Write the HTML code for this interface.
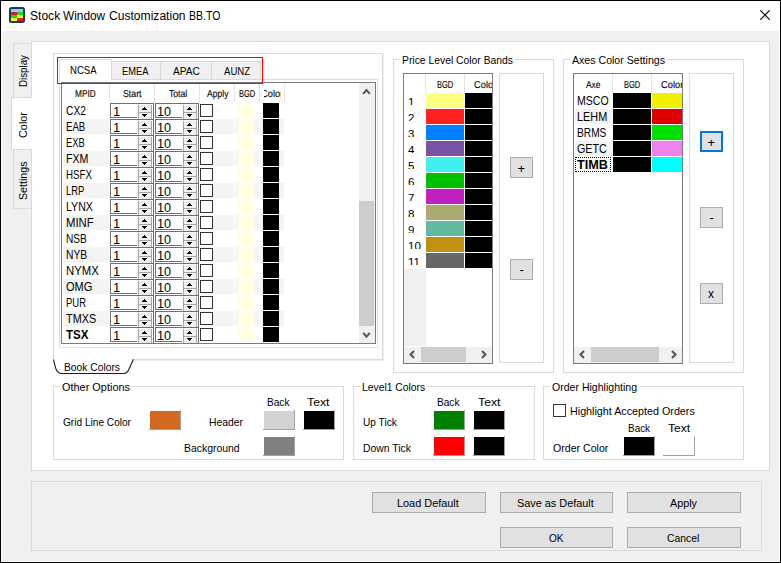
<!DOCTYPE html>
<html lang="en"><head><meta charset="utf-8"><title>Stock Window Customization BB.TO</title>
<style>
html,body{margin:0;padding:0;background:#f0f0f0;}
body{width:781px;height:563px;position:relative;overflow:hidden;font-family:"Liberation Sans", Arial, sans-serif;}
#w{position:absolute;left:0;top:0;width:781px;height:563px;overflow:hidden;}
#w div{position:absolute;}
.t{position:absolute;white-space:nowrap;display:block;}
</style></head><body><div id="w">
<div style="left:0px;top:0px;width:781px;height:563px;background:#000;"></div>
<div style="left:1px;top:1px;width:779px;height:561px;background:#fff;"></div>
<div style="left:1px;top:31px;width:778px;height:530px;background:#f0f0f0;"></div>
<div style="left:1px;top:31px;width:1px;height:530px;background:#fff;"></div>
<svg style="position:absolute;left:9px;top:7px" width="16" height="16" viewBox="0 0 16 16">
<rect x="0" y="0" width="16" height="16" rx="2.5" fill="#1f3a63"/>
<rect x="2" y="2" width="12" height="3" fill="#86d3ee"/>
<rect x="2" y="5" width="6" height="3" fill="#d42020"/><rect x="8" y="5" width="6" height="3" fill="#10e010"/>
<rect x="2" y="8" width="6" height="3" fill="#10e010"/><rect x="8" y="8" width="6" height="3" fill="#ffff10"/>
<rect x="2" y="11" width="6" height="3" fill="#ffff10"/><rect x="8" y="11" width="6" height="3" fill="#d42020"/>
</svg>
<span id="tt_Stock" class="t" style="left:29.80px;top:8.87px;font-size:12.5px;line-height:15px;color:#000;transform-origin:0 0;transform:scaleX(0.9659);">Stock</span>
<span id="tt_Window" class="t" style="left:62.80px;top:8.87px;font-size:12.5px;line-height:15px;color:#000;transform-origin:0 0;transform:scaleX(0.9490);">Window</span>
<span id="tt_Customization" class="t" style="left:109.20px;top:8.87px;font-size:12.5px;line-height:15px;color:#000;transform-origin:0 0;transform:scaleX(0.9671);">Customization</span>
<span id="tt_BBTO" class="t" style="left:189.20px;top:8.87px;font-size:12.5px;line-height:15px;color:#000;transform-origin:0 0;transform:scaleX(0.8422);">BB.TO</span>
<svg style="position:absolute;left:760px;top:10px" width="10" height="10" viewBox="0 0 10 10">
<path d="M0.3 0.3 L9.7 9.7 M9.7 0.3 L0.3 9.7" stroke="#000" stroke-width="1.15" fill="none"/></svg>
<div style="left:31px;top:41px;width:739px;height:430px;background:#fff;border:1px solid #dadada;box-sizing:border-box;"></div>
<div style="left:13px;top:43px;width:19px;height:55px;background:#f0f0f0;border:1px solid #dadada;box-sizing:border-box;border-right:none;"></div>
<div style="left:13px;top:149px;width:19px;height:60px;background:#f0f0f0;border:1px solid #dadada;box-sizing:border-box;border-right:none;"></div>
<div style="left:31px;top:43px;width:1px;height:55px;background:#dadada;"></div>
<div style="left:31px;top:149px;width:1px;height:60px;background:#dadada;"></div>
<div style="left:11px;top:97px;width:21px;height:53px;background:#fff;border:1px solid #dadada;box-sizing:border-box;border-right:none;"></div>
<span id="t4" class="t" style="left:15.52px;top:87px;font-size:11.5px;line-height:14px;color:#000;transform-origin:0 0;transform:rotate(-90deg) scaleX(0.8484);">Display</span>
<span id="t5" class="t" style="left:15.52px;top:138px;font-size:11.5px;line-height:14px;color:#000;transform-origin:0 0;transform:rotate(-90deg) scaleX(0.9460);">Color</span>
<span id="t6" class="t" style="left:15.52px;top:199.5px;font-size:11.5px;line-height:14px;color:#000;transform-origin:0 0;transform:rotate(-90deg) scaleX(0.9263);">Settings</span>
<div style="left:53px;top:53px;width:330px;height:307px;background:#fff;border:1px solid #dadada;box-sizing:border-box;"></div>
<div style="left:383px;top:54px;width:1px;height:307px;background:#ededed;"></div>
<div style="left:134px;top:360px;width:250px;height:1px;background:#ededed;"></div>
<svg style="position:absolute;left:50px;top:358px" width="90" height="18" viewBox="0 0 90 18">
<path d="M4 0.5 L4 1.5 C5.5 8 6.5 15.5 11.5 15.5 L74 15.5 C77 15.5 78.3 13 79.3 10.5 L83.2 1.5 L83.2 0.5 Z" fill="#fff" stroke="none"/>
<path d="M3.5 1.5 C5 8 6 15.5 11.5 15.5 L74 15.5 C77 15.5 78.3 13 79.3 10.5 L83.4 1.3" fill="none" stroke="#1c1c1c" stroke-width="1.1"/></svg>
<span id="t7" class="t" style="left:64.30px;top:360.69px;font-size:11px;line-height:13px;color:#000;transform-origin:0 0;transform:scaleX(0.9346);">Book Colors</span>
<div style="left:59px;top:79px;width:319px;height:1px;background:#d9d9d9;"></div>
<div style="left:59px;top:79px;width:1px;height:269px;background:#d9d9d9;"></div>
<div style="left:377px;top:79px;width:1px;height:269px;background:#e3e3e3;"></div>
<div style="left:59px;top:347px;width:319px;height:1px;background:#e3e3e3;"></div>
<div style="left:379px;top:82px;width:1px;height:268px;background:#f3f3f3;"></div>
<div style="left:111px;top:61px;width:50px;height:18px;background:#f0f0f0;border:1px solid #d9d9d9;box-sizing:border-box;border-bottom:none;"></div>
<span id="t8" class="t" style="left:121.50px;top:64.69px;font-size:11px;line-height:13px;color:#000;transform-origin:0 0;transform:scaleX(0.8465);">EMEA</span>
<div style="left:160px;top:61px;width:52px;height:18px;background:#f0f0f0;border:1px solid #d9d9d9;box-sizing:border-box;border-bottom:none;"></div>
<span id="t9" class="t" style="left:172.70px;top:64.69px;font-size:11px;line-height:13px;color:#000;transform-origin:0 0;transform:scaleX(0.9197);">APAC</span>
<div style="left:211px;top:61px;width:50px;height:18px;background:#f0f0f0;border:1px solid #d9d9d9;box-sizing:border-box;border-bottom:none;"></div>
<span id="t10" class="t" style="left:224.10px;top:64.69px;font-size:11px;line-height:13px;color:#000;transform-origin:0 0;transform:scaleX(0.8714);">AUNZ</span>
<div style="left:59px;top:59px;width:53px;height:21px;background:#fff;border:1px solid #d9d9d9;box-sizing:border-box;border-bottom:none;"></div>
<span id="t11" class="t" style="left:70.30px;top:63.69px;font-size:11px;line-height:13px;color:#000;transform-origin:0 0;transform:scaleX(0.8703);">NCSA</span>
<div style="left:61px;top:82px;width:315px;height:262px;background:#fff;border:1px solid #7a7a85;box-sizing:border-box;"></div>
<div style="left:109px;top:83px;width:1px;height:19px;background:#e4e4e4;"></div>
<div style="left:154px;top:83px;width:1px;height:19px;background:#e4e4e4;"></div>
<div style="left:199px;top:83px;width:1px;height:19px;background:#e4e4e4;"></div>
<div style="left:234px;top:83px;width:1px;height:19px;background:#e4e4e4;"></div>
<div style="left:259px;top:83px;width:1px;height:19px;background:#e4e4e4;"></div>
<div style="left:284px;top:83px;width:1px;height:19px;background:#e4e4e4;"></div>
<span id="t12" class="t" style="left:75.40px;top:89.44px;font-size:10px;line-height:12px;color:#000;text-rendering:geometricPrecision;-webkit-text-stroke:0.12px #000;transform-origin:0 0;transform:scaleX(0.8280);">MPID</span>
<span id="t13" class="t" style="left:123.40px;top:89.44px;font-size:10px;line-height:12px;color:#000;text-rendering:geometricPrecision;-webkit-text-stroke:0.12px #000;transform-origin:0 0;transform:scaleX(0.8757);">Start</span>
<span id="t14" class="t" style="left:168.70px;top:89.44px;font-size:10px;line-height:12px;color:#000;text-rendering:geometricPrecision;-webkit-text-stroke:0.12px #000;transform-origin:0 0;transform:scaleX(0.8615);">Total</span>
<span id="t15" class="t" style="left:206.50px;top:89.44px;font-size:10px;line-height:12px;color:#000;text-rendering:geometricPrecision;-webkit-text-stroke:0.12px #000;transform-origin:0 0;transform:scaleX(0.8595);">Apply</span>
<span id="t16" class="t" style="left:239.40px;top:89.44px;font-size:10px;line-height:12px;color:#000;text-rendering:geometricPrecision;-webkit-text-stroke:0.12px #000;transform-origin:0 0;transform:scaleX(0.7521);">BGD</span>
<div style="left:264px;top:84px;width:17px;height:17px;overflow:hidden;"><span id="t17" class="t" style="left:-3.40px;top:5.44px;font-size:10px;line-height:12px;color:#000;text-rendering:geometricPrecision;-webkit-text-stroke:0.12px #000;transform-origin:0 0;transform:scaleX(0.9300);">Color</span></div>
<span id="n0" class="t" style="left:65.60px;top:102.52px;font-size:13.5px;line-height:16px;color:#000;transform-origin:0 0;transform:scaleX(0.7615);">CX2</span>
<div style="left:110px;top:103px;width:44px;height:15px;background:#fff;"></div>
<div style="left:110px;top:103px;width:44px;height:1px;background:#707070;"></div>
<div style="left:110px;top:103px;width:1px;height:15px;background:#707070;"></div>
<div style="left:153px;top:103px;width:1px;height:16px;background:#707070;"></div>
<div style="left:139px;top:105px;width:12px;height:14px;background:#f0f0f0;"></div>
<div style="left:138px;top:105px;width:1px;height:14px;background:#a6a6a6;"></div>
<div style="left:151px;top:105px;width:1px;height:14px;background:#a6a6a6;"></div>
<div style="left:139px;top:112px;width:12px;height:1px;background:#a6a6a6;"></div>
<div style="left:111px;top:117px;width:26px;height:1px;background:#707070;"></div>
<svg style="position:absolute;left:142px;top:107px" width="5" height="10" viewBox="0 0 5 10"><path d="M2 0h1v1h1v1h1v1h-5v-1h1v-1h1z M0 7h5v1h-1v1h-1v1h-1v-1h-1v-1h-1z" fill="#000"/></svg>
<span id="t19" class="t" style="left:113.00px;top:103.50px;font-size:13px;line-height:16px;color:#000;transform-origin:0 0;transform:scaleX(1.0000);">1</span>
<div style="left:155px;top:103px;width:44px;height:15px;background:#fff;"></div>
<div style="left:155px;top:103px;width:44px;height:1px;background:#707070;"></div>
<div style="left:155px;top:103px;width:1px;height:15px;background:#707070;"></div>
<div style="left:198px;top:103px;width:1px;height:16px;background:#707070;"></div>
<div style="left:184px;top:105px;width:12px;height:14px;background:#f0f0f0;"></div>
<div style="left:183px;top:105px;width:1px;height:14px;background:#a6a6a6;"></div>
<div style="left:196px;top:105px;width:1px;height:14px;background:#a6a6a6;"></div>
<div style="left:184px;top:112px;width:12px;height:1px;background:#a6a6a6;"></div>
<div style="left:156px;top:117px;width:26px;height:1px;background:#707070;"></div>
<svg style="position:absolute;left:187px;top:107px" width="5" height="10" viewBox="0 0 5 10"><path d="M2 0h1v1h1v1h1v1h-5v-1h1v-1h1z M0 7h5v1h-1v1h-1v1h-1v-1h-1v-1h-1z" fill="#000"/></svg>
<span id="t20" class="t" style="left:157.00px;top:103.50px;font-size:13px;line-height:16px;color:#000;transform-origin:0 0;transform:scaleX(0.9700);">10</span>
<div style="left:200px;top:104px;width:13px;height:13px;background:#fff;border:1px solid #333;box-sizing:border-box;"></div>
<div style="left:238px;top:103px;width:16px;height:15px;background:#ffffe1;"></div>
<div style="left:263px;top:103px;width:16px;height:15px;background:#000;"></div>
<div style="left:63px;top:119px;width:221px;height:15px;background:#f4f4f4;"></div>
<div style="left:109px;top:119px;width:1px;height:15px;background:#fff;"></div>
<div style="left:154px;top:119px;width:1px;height:15px;background:#fff;"></div>
<div style="left:199px;top:119px;width:1px;height:15px;background:#fff;"></div>
<div style="left:234px;top:119px;width:1px;height:15px;background:#fff;"></div>
<div style="left:259px;top:119px;width:1px;height:15px;background:#fff;"></div>
<span id="n1" class="t" style="left:65.60px;top:118.52px;font-size:13.5px;line-height:16px;color:#000;transform-origin:0 0;transform:scaleX(0.7107);">EAB</span>
<div style="left:110px;top:119px;width:44px;height:15px;background:#fff;"></div>
<div style="left:110px;top:119px;width:44px;height:1px;background:#707070;"></div>
<div style="left:110px;top:119px;width:1px;height:15px;background:#707070;"></div>
<div style="left:153px;top:119px;width:1px;height:16px;background:#707070;"></div>
<div style="left:139px;top:121px;width:12px;height:14px;background:#f0f0f0;"></div>
<div style="left:138px;top:121px;width:1px;height:14px;background:#a6a6a6;"></div>
<div style="left:151px;top:121px;width:1px;height:14px;background:#a6a6a6;"></div>
<div style="left:139px;top:128px;width:12px;height:1px;background:#a6a6a6;"></div>
<div style="left:111px;top:133px;width:26px;height:1px;background:#707070;"></div>
<svg style="position:absolute;left:142px;top:123px" width="5" height="10" viewBox="0 0 5 10"><path d="M2 0h1v1h1v1h1v1h-5v-1h1v-1h1z M0 7h5v1h-1v1h-1v1h-1v-1h-1v-1h-1z" fill="#000"/></svg>
<span id="t22" class="t" style="left:113.00px;top:119.50px;font-size:13px;line-height:16px;color:#000;transform-origin:0 0;transform:scaleX(1.0000);">1</span>
<div style="left:155px;top:119px;width:44px;height:15px;background:#fff;"></div>
<div style="left:155px;top:119px;width:44px;height:1px;background:#707070;"></div>
<div style="left:155px;top:119px;width:1px;height:15px;background:#707070;"></div>
<div style="left:198px;top:119px;width:1px;height:16px;background:#707070;"></div>
<div style="left:184px;top:121px;width:12px;height:14px;background:#f0f0f0;"></div>
<div style="left:183px;top:121px;width:1px;height:14px;background:#a6a6a6;"></div>
<div style="left:196px;top:121px;width:1px;height:14px;background:#a6a6a6;"></div>
<div style="left:184px;top:128px;width:12px;height:1px;background:#a6a6a6;"></div>
<div style="left:156px;top:133px;width:26px;height:1px;background:#707070;"></div>
<svg style="position:absolute;left:187px;top:123px" width="5" height="10" viewBox="0 0 5 10"><path d="M2 0h1v1h1v1h1v1h-5v-1h1v-1h1z M0 7h5v1h-1v1h-1v1h-1v-1h-1v-1h-1z" fill="#000"/></svg>
<span id="t23" class="t" style="left:157.00px;top:119.50px;font-size:13px;line-height:16px;color:#000;transform-origin:0 0;transform:scaleX(0.9700);">10</span>
<div style="left:200px;top:120px;width:13px;height:13px;background:#fff;border:1px solid #333;box-sizing:border-box;"></div>
<div style="left:238px;top:119px;width:16px;height:15px;background:#ffffe1;"></div>
<div style="left:263px;top:119px;width:16px;height:15px;background:#000;"></div>
<span id="n2" class="t" style="left:65.60px;top:134.52px;font-size:13.5px;line-height:16px;color:#000;transform-origin:0 0;transform:scaleX(0.6922);">EXB</span>
<div style="left:110px;top:135px;width:44px;height:15px;background:#fff;"></div>
<div style="left:110px;top:135px;width:44px;height:1px;background:#707070;"></div>
<div style="left:110px;top:135px;width:1px;height:15px;background:#707070;"></div>
<div style="left:153px;top:135px;width:1px;height:16px;background:#707070;"></div>
<div style="left:139px;top:137px;width:12px;height:14px;background:#f0f0f0;"></div>
<div style="left:138px;top:137px;width:1px;height:14px;background:#a6a6a6;"></div>
<div style="left:151px;top:137px;width:1px;height:14px;background:#a6a6a6;"></div>
<div style="left:139px;top:144px;width:12px;height:1px;background:#a6a6a6;"></div>
<div style="left:111px;top:149px;width:26px;height:1px;background:#707070;"></div>
<svg style="position:absolute;left:142px;top:139px" width="5" height="10" viewBox="0 0 5 10"><path d="M2 0h1v1h1v1h1v1h-5v-1h1v-1h1z M0 7h5v1h-1v1h-1v1h-1v-1h-1v-1h-1z" fill="#000"/></svg>
<span id="t25" class="t" style="left:113.00px;top:135.50px;font-size:13px;line-height:16px;color:#000;transform-origin:0 0;transform:scaleX(1.0000);">1</span>
<div style="left:155px;top:135px;width:44px;height:15px;background:#fff;"></div>
<div style="left:155px;top:135px;width:44px;height:1px;background:#707070;"></div>
<div style="left:155px;top:135px;width:1px;height:15px;background:#707070;"></div>
<div style="left:198px;top:135px;width:1px;height:16px;background:#707070;"></div>
<div style="left:184px;top:137px;width:12px;height:14px;background:#f0f0f0;"></div>
<div style="left:183px;top:137px;width:1px;height:14px;background:#a6a6a6;"></div>
<div style="left:196px;top:137px;width:1px;height:14px;background:#a6a6a6;"></div>
<div style="left:184px;top:144px;width:12px;height:1px;background:#a6a6a6;"></div>
<div style="left:156px;top:149px;width:26px;height:1px;background:#707070;"></div>
<svg style="position:absolute;left:187px;top:139px" width="5" height="10" viewBox="0 0 5 10"><path d="M2 0h1v1h1v1h1v1h-5v-1h1v-1h1z M0 7h5v1h-1v1h-1v1h-1v-1h-1v-1h-1z" fill="#000"/></svg>
<span id="t26" class="t" style="left:157.00px;top:135.50px;font-size:13px;line-height:16px;color:#000;transform-origin:0 0;transform:scaleX(0.9700);">10</span>
<div style="left:200px;top:136px;width:13px;height:13px;background:#fff;border:1px solid #333;box-sizing:border-box;"></div>
<div style="left:238px;top:135px;width:16px;height:15px;background:#ffffe1;"></div>
<div style="left:263px;top:135px;width:16px;height:15px;background:#000;"></div>
<div style="left:63px;top:151px;width:221px;height:15px;background:#f4f4f4;"></div>
<div style="left:109px;top:151px;width:1px;height:15px;background:#fff;"></div>
<div style="left:154px;top:151px;width:1px;height:15px;background:#fff;"></div>
<div style="left:199px;top:151px;width:1px;height:15px;background:#fff;"></div>
<div style="left:234px;top:151px;width:1px;height:15px;background:#fff;"></div>
<div style="left:259px;top:151px;width:1px;height:15px;background:#fff;"></div>
<span id="n3" class="t" style="left:65.60px;top:150.52px;font-size:13.5px;line-height:16px;color:#000;transform-origin:0 0;transform:scaleX(0.7895);">FXM</span>
<div style="left:110px;top:151px;width:44px;height:15px;background:#fff;"></div>
<div style="left:110px;top:151px;width:44px;height:1px;background:#707070;"></div>
<div style="left:110px;top:151px;width:1px;height:15px;background:#707070;"></div>
<div style="left:153px;top:151px;width:1px;height:16px;background:#707070;"></div>
<div style="left:139px;top:153px;width:12px;height:14px;background:#f0f0f0;"></div>
<div style="left:138px;top:153px;width:1px;height:14px;background:#a6a6a6;"></div>
<div style="left:151px;top:153px;width:1px;height:14px;background:#a6a6a6;"></div>
<div style="left:139px;top:160px;width:12px;height:1px;background:#a6a6a6;"></div>
<div style="left:111px;top:165px;width:26px;height:1px;background:#707070;"></div>
<svg style="position:absolute;left:142px;top:155px" width="5" height="10" viewBox="0 0 5 10"><path d="M2 0h1v1h1v1h1v1h-5v-1h1v-1h1z M0 7h5v1h-1v1h-1v1h-1v-1h-1v-1h-1z" fill="#000"/></svg>
<span id="t28" class="t" style="left:113.00px;top:151.50px;font-size:13px;line-height:16px;color:#000;transform-origin:0 0;transform:scaleX(1.0000);">1</span>
<div style="left:155px;top:151px;width:44px;height:15px;background:#fff;"></div>
<div style="left:155px;top:151px;width:44px;height:1px;background:#707070;"></div>
<div style="left:155px;top:151px;width:1px;height:15px;background:#707070;"></div>
<div style="left:198px;top:151px;width:1px;height:16px;background:#707070;"></div>
<div style="left:184px;top:153px;width:12px;height:14px;background:#f0f0f0;"></div>
<div style="left:183px;top:153px;width:1px;height:14px;background:#a6a6a6;"></div>
<div style="left:196px;top:153px;width:1px;height:14px;background:#a6a6a6;"></div>
<div style="left:184px;top:160px;width:12px;height:1px;background:#a6a6a6;"></div>
<div style="left:156px;top:165px;width:26px;height:1px;background:#707070;"></div>
<svg style="position:absolute;left:187px;top:155px" width="5" height="10" viewBox="0 0 5 10"><path d="M2 0h1v1h1v1h1v1h-5v-1h1v-1h1z M0 7h5v1h-1v1h-1v1h-1v-1h-1v-1h-1z" fill="#000"/></svg>
<span id="t29" class="t" style="left:157.00px;top:151.50px;font-size:13px;line-height:16px;color:#000;transform-origin:0 0;transform:scaleX(0.9700);">10</span>
<div style="left:200px;top:152px;width:13px;height:13px;background:#fff;border:1px solid #333;box-sizing:border-box;"></div>
<div style="left:238px;top:151px;width:16px;height:15px;background:#ffffe1;"></div>
<div style="left:263px;top:151px;width:16px;height:15px;background:#000;"></div>
<span id="n4" class="t" style="left:65.60px;top:166.52px;font-size:13.5px;line-height:16px;color:#000;transform-origin:0 0;transform:scaleX(0.7191);">HSFX</span>
<div style="left:110px;top:167px;width:44px;height:15px;background:#fff;"></div>
<div style="left:110px;top:167px;width:44px;height:1px;background:#707070;"></div>
<div style="left:110px;top:167px;width:1px;height:15px;background:#707070;"></div>
<div style="left:153px;top:167px;width:1px;height:16px;background:#707070;"></div>
<div style="left:139px;top:169px;width:12px;height:14px;background:#f0f0f0;"></div>
<div style="left:138px;top:169px;width:1px;height:14px;background:#a6a6a6;"></div>
<div style="left:151px;top:169px;width:1px;height:14px;background:#a6a6a6;"></div>
<div style="left:139px;top:176px;width:12px;height:1px;background:#a6a6a6;"></div>
<div style="left:111px;top:181px;width:26px;height:1px;background:#707070;"></div>
<svg style="position:absolute;left:142px;top:171px" width="5" height="10" viewBox="0 0 5 10"><path d="M2 0h1v1h1v1h1v1h-5v-1h1v-1h1z M0 7h5v1h-1v1h-1v1h-1v-1h-1v-1h-1z" fill="#000"/></svg>
<span id="t31" class="t" style="left:113.00px;top:167.50px;font-size:13px;line-height:16px;color:#000;transform-origin:0 0;transform:scaleX(1.0000);">1</span>
<div style="left:155px;top:167px;width:44px;height:15px;background:#fff;"></div>
<div style="left:155px;top:167px;width:44px;height:1px;background:#707070;"></div>
<div style="left:155px;top:167px;width:1px;height:15px;background:#707070;"></div>
<div style="left:198px;top:167px;width:1px;height:16px;background:#707070;"></div>
<div style="left:184px;top:169px;width:12px;height:14px;background:#f0f0f0;"></div>
<div style="left:183px;top:169px;width:1px;height:14px;background:#a6a6a6;"></div>
<div style="left:196px;top:169px;width:1px;height:14px;background:#a6a6a6;"></div>
<div style="left:184px;top:176px;width:12px;height:1px;background:#a6a6a6;"></div>
<div style="left:156px;top:181px;width:26px;height:1px;background:#707070;"></div>
<svg style="position:absolute;left:187px;top:171px" width="5" height="10" viewBox="0 0 5 10"><path d="M2 0h1v1h1v1h1v1h-5v-1h1v-1h1z M0 7h5v1h-1v1h-1v1h-1v-1h-1v-1h-1z" fill="#000"/></svg>
<span id="t32" class="t" style="left:157.00px;top:167.50px;font-size:13px;line-height:16px;color:#000;transform-origin:0 0;transform:scaleX(0.9700);">10</span>
<div style="left:200px;top:168px;width:13px;height:13px;background:#fff;border:1px solid #333;box-sizing:border-box;"></div>
<div style="left:238px;top:167px;width:16px;height:15px;background:#ffffe1;"></div>
<div style="left:263px;top:167px;width:16px;height:15px;background:#000;"></div>
<div style="left:63px;top:183px;width:221px;height:15px;background:#f4f4f4;"></div>
<div style="left:109px;top:183px;width:1px;height:15px;background:#fff;"></div>
<div style="left:154px;top:183px;width:1px;height:15px;background:#fff;"></div>
<div style="left:199px;top:183px;width:1px;height:15px;background:#fff;"></div>
<div style="left:234px;top:183px;width:1px;height:15px;background:#fff;"></div>
<div style="left:259px;top:183px;width:1px;height:15px;background:#fff;"></div>
<span id="n5" class="t" style="left:65.60px;top:182.52px;font-size:13.5px;line-height:16px;color:#000;transform-origin:0 0;transform:scaleX(0.6929);">LRP</span>
<div style="left:110px;top:183px;width:44px;height:15px;background:#fff;"></div>
<div style="left:110px;top:183px;width:44px;height:1px;background:#707070;"></div>
<div style="left:110px;top:183px;width:1px;height:15px;background:#707070;"></div>
<div style="left:153px;top:183px;width:1px;height:16px;background:#707070;"></div>
<div style="left:139px;top:185px;width:12px;height:14px;background:#f0f0f0;"></div>
<div style="left:138px;top:185px;width:1px;height:14px;background:#a6a6a6;"></div>
<div style="left:151px;top:185px;width:1px;height:14px;background:#a6a6a6;"></div>
<div style="left:139px;top:192px;width:12px;height:1px;background:#a6a6a6;"></div>
<div style="left:111px;top:197px;width:26px;height:1px;background:#707070;"></div>
<svg style="position:absolute;left:142px;top:187px" width="5" height="10" viewBox="0 0 5 10"><path d="M2 0h1v1h1v1h1v1h-5v-1h1v-1h1z M0 7h5v1h-1v1h-1v1h-1v-1h-1v-1h-1z" fill="#000"/></svg>
<span id="t34" class="t" style="left:113.00px;top:183.50px;font-size:13px;line-height:16px;color:#000;transform-origin:0 0;transform:scaleX(1.0000);">1</span>
<div style="left:155px;top:183px;width:44px;height:15px;background:#fff;"></div>
<div style="left:155px;top:183px;width:44px;height:1px;background:#707070;"></div>
<div style="left:155px;top:183px;width:1px;height:15px;background:#707070;"></div>
<div style="left:198px;top:183px;width:1px;height:16px;background:#707070;"></div>
<div style="left:184px;top:185px;width:12px;height:14px;background:#f0f0f0;"></div>
<div style="left:183px;top:185px;width:1px;height:14px;background:#a6a6a6;"></div>
<div style="left:196px;top:185px;width:1px;height:14px;background:#a6a6a6;"></div>
<div style="left:184px;top:192px;width:12px;height:1px;background:#a6a6a6;"></div>
<div style="left:156px;top:197px;width:26px;height:1px;background:#707070;"></div>
<svg style="position:absolute;left:187px;top:187px" width="5" height="10" viewBox="0 0 5 10"><path d="M2 0h1v1h1v1h1v1h-5v-1h1v-1h1z M0 7h5v1h-1v1h-1v1h-1v-1h-1v-1h-1z" fill="#000"/></svg>
<span id="t35" class="t" style="left:157.00px;top:183.50px;font-size:13px;line-height:16px;color:#000;transform-origin:0 0;transform:scaleX(0.9700);">10</span>
<div style="left:200px;top:184px;width:13px;height:13px;background:#fff;border:1px solid #333;box-sizing:border-box;"></div>
<div style="left:238px;top:183px;width:16px;height:15px;background:#ffffe1;"></div>
<div style="left:263px;top:183px;width:16px;height:15px;background:#000;"></div>
<span id="n6" class="t" style="left:65.60px;top:198.52px;font-size:13.5px;line-height:16px;color:#000;transform-origin:0 0;transform:scaleX(0.7850);">LYNX</span>
<div style="left:110px;top:199px;width:44px;height:15px;background:#fff;"></div>
<div style="left:110px;top:199px;width:44px;height:1px;background:#707070;"></div>
<div style="left:110px;top:199px;width:1px;height:15px;background:#707070;"></div>
<div style="left:153px;top:199px;width:1px;height:16px;background:#707070;"></div>
<div style="left:139px;top:201px;width:12px;height:14px;background:#f0f0f0;"></div>
<div style="left:138px;top:201px;width:1px;height:14px;background:#a6a6a6;"></div>
<div style="left:151px;top:201px;width:1px;height:14px;background:#a6a6a6;"></div>
<div style="left:139px;top:208px;width:12px;height:1px;background:#a6a6a6;"></div>
<div style="left:111px;top:213px;width:26px;height:1px;background:#707070;"></div>
<svg style="position:absolute;left:142px;top:203px" width="5" height="10" viewBox="0 0 5 10"><path d="M2 0h1v1h1v1h1v1h-5v-1h1v-1h1z M0 7h5v1h-1v1h-1v1h-1v-1h-1v-1h-1z" fill="#000"/></svg>
<span id="t37" class="t" style="left:113.00px;top:199.50px;font-size:13px;line-height:16px;color:#000;transform-origin:0 0;transform:scaleX(1.0000);">1</span>
<div style="left:155px;top:199px;width:44px;height:15px;background:#fff;"></div>
<div style="left:155px;top:199px;width:44px;height:1px;background:#707070;"></div>
<div style="left:155px;top:199px;width:1px;height:15px;background:#707070;"></div>
<div style="left:198px;top:199px;width:1px;height:16px;background:#707070;"></div>
<div style="left:184px;top:201px;width:12px;height:14px;background:#f0f0f0;"></div>
<div style="left:183px;top:201px;width:1px;height:14px;background:#a6a6a6;"></div>
<div style="left:196px;top:201px;width:1px;height:14px;background:#a6a6a6;"></div>
<div style="left:184px;top:208px;width:12px;height:1px;background:#a6a6a6;"></div>
<div style="left:156px;top:213px;width:26px;height:1px;background:#707070;"></div>
<svg style="position:absolute;left:187px;top:203px" width="5" height="10" viewBox="0 0 5 10"><path d="M2 0h1v1h1v1h1v1h-5v-1h1v-1h1z M0 7h5v1h-1v1h-1v1h-1v-1h-1v-1h-1z" fill="#000"/></svg>
<span id="t38" class="t" style="left:157.00px;top:199.50px;font-size:13px;line-height:16px;color:#000;transform-origin:0 0;transform:scaleX(0.9700);">10</span>
<div style="left:200px;top:200px;width:13px;height:13px;background:#fff;border:1px solid #333;box-sizing:border-box;"></div>
<div style="left:238px;top:199px;width:16px;height:15px;background:#ffffe1;"></div>
<div style="left:263px;top:199px;width:16px;height:15px;background:#000;"></div>
<div style="left:63px;top:215px;width:221px;height:15px;background:#f4f4f4;"></div>
<div style="left:109px;top:215px;width:1px;height:15px;background:#fff;"></div>
<div style="left:154px;top:215px;width:1px;height:15px;background:#fff;"></div>
<div style="left:199px;top:215px;width:1px;height:15px;background:#fff;"></div>
<div style="left:234px;top:215px;width:1px;height:15px;background:#fff;"></div>
<div style="left:259px;top:215px;width:1px;height:15px;background:#fff;"></div>
<span id="n7" class="t" style="left:65.60px;top:214.52px;font-size:13.5px;line-height:16px;color:#000;transform-origin:0 0;transform:scaleX(0.8394);">MINF</span>
<div style="left:110px;top:215px;width:44px;height:15px;background:#fff;"></div>
<div style="left:110px;top:215px;width:44px;height:1px;background:#707070;"></div>
<div style="left:110px;top:215px;width:1px;height:15px;background:#707070;"></div>
<div style="left:153px;top:215px;width:1px;height:16px;background:#707070;"></div>
<div style="left:139px;top:217px;width:12px;height:14px;background:#f0f0f0;"></div>
<div style="left:138px;top:217px;width:1px;height:14px;background:#a6a6a6;"></div>
<div style="left:151px;top:217px;width:1px;height:14px;background:#a6a6a6;"></div>
<div style="left:139px;top:224px;width:12px;height:1px;background:#a6a6a6;"></div>
<div style="left:111px;top:229px;width:26px;height:1px;background:#707070;"></div>
<svg style="position:absolute;left:142px;top:219px" width="5" height="10" viewBox="0 0 5 10"><path d="M2 0h1v1h1v1h1v1h-5v-1h1v-1h1z M0 7h5v1h-1v1h-1v1h-1v-1h-1v-1h-1z" fill="#000"/></svg>
<span id="t40" class="t" style="left:113.00px;top:215.50px;font-size:13px;line-height:16px;color:#000;transform-origin:0 0;transform:scaleX(1.0000);">1</span>
<div style="left:155px;top:215px;width:44px;height:15px;background:#fff;"></div>
<div style="left:155px;top:215px;width:44px;height:1px;background:#707070;"></div>
<div style="left:155px;top:215px;width:1px;height:15px;background:#707070;"></div>
<div style="left:198px;top:215px;width:1px;height:16px;background:#707070;"></div>
<div style="left:184px;top:217px;width:12px;height:14px;background:#f0f0f0;"></div>
<div style="left:183px;top:217px;width:1px;height:14px;background:#a6a6a6;"></div>
<div style="left:196px;top:217px;width:1px;height:14px;background:#a6a6a6;"></div>
<div style="left:184px;top:224px;width:12px;height:1px;background:#a6a6a6;"></div>
<div style="left:156px;top:229px;width:26px;height:1px;background:#707070;"></div>
<svg style="position:absolute;left:187px;top:219px" width="5" height="10" viewBox="0 0 5 10"><path d="M2 0h1v1h1v1h1v1h-5v-1h1v-1h1z M0 7h5v1h-1v1h-1v1h-1v-1h-1v-1h-1z" fill="#000"/></svg>
<span id="t41" class="t" style="left:157.00px;top:215.50px;font-size:13px;line-height:16px;color:#000;transform-origin:0 0;transform:scaleX(0.9700);">10</span>
<div style="left:200px;top:216px;width:13px;height:13px;background:#fff;border:1px solid #333;box-sizing:border-box;"></div>
<div style="left:238px;top:215px;width:16px;height:15px;background:#ffffe1;"></div>
<div style="left:263px;top:215px;width:16px;height:15px;background:#000;"></div>
<span id="n8" class="t" style="left:65.60px;top:230.52px;font-size:13.5px;line-height:16px;color:#000;transform-origin:0 0;transform:scaleX(0.7491);">NSB</span>
<div style="left:110px;top:231px;width:44px;height:15px;background:#fff;"></div>
<div style="left:110px;top:231px;width:44px;height:1px;background:#707070;"></div>
<div style="left:110px;top:231px;width:1px;height:15px;background:#707070;"></div>
<div style="left:153px;top:231px;width:1px;height:16px;background:#707070;"></div>
<div style="left:139px;top:233px;width:12px;height:14px;background:#f0f0f0;"></div>
<div style="left:138px;top:233px;width:1px;height:14px;background:#a6a6a6;"></div>
<div style="left:151px;top:233px;width:1px;height:14px;background:#a6a6a6;"></div>
<div style="left:139px;top:240px;width:12px;height:1px;background:#a6a6a6;"></div>
<div style="left:111px;top:245px;width:26px;height:1px;background:#707070;"></div>
<svg style="position:absolute;left:142px;top:235px" width="5" height="10" viewBox="0 0 5 10"><path d="M2 0h1v1h1v1h1v1h-5v-1h1v-1h1z M0 7h5v1h-1v1h-1v1h-1v-1h-1v-1h-1z" fill="#000"/></svg>
<span id="t43" class="t" style="left:113.00px;top:231.50px;font-size:13px;line-height:16px;color:#000;transform-origin:0 0;transform:scaleX(1.0000);">1</span>
<div style="left:155px;top:231px;width:44px;height:15px;background:#fff;"></div>
<div style="left:155px;top:231px;width:44px;height:1px;background:#707070;"></div>
<div style="left:155px;top:231px;width:1px;height:15px;background:#707070;"></div>
<div style="left:198px;top:231px;width:1px;height:16px;background:#707070;"></div>
<div style="left:184px;top:233px;width:12px;height:14px;background:#f0f0f0;"></div>
<div style="left:183px;top:233px;width:1px;height:14px;background:#a6a6a6;"></div>
<div style="left:196px;top:233px;width:1px;height:14px;background:#a6a6a6;"></div>
<div style="left:184px;top:240px;width:12px;height:1px;background:#a6a6a6;"></div>
<div style="left:156px;top:245px;width:26px;height:1px;background:#707070;"></div>
<svg style="position:absolute;left:187px;top:235px" width="5" height="10" viewBox="0 0 5 10"><path d="M2 0h1v1h1v1h1v1h-5v-1h1v-1h1z M0 7h5v1h-1v1h-1v1h-1v-1h-1v-1h-1z" fill="#000"/></svg>
<span id="t44" class="t" style="left:157.00px;top:231.50px;font-size:13px;line-height:16px;color:#000;transform-origin:0 0;transform:scaleX(0.9700);">10</span>
<div style="left:200px;top:232px;width:13px;height:13px;background:#fff;border:1px solid #333;box-sizing:border-box;"></div>
<div style="left:238px;top:231px;width:16px;height:15px;background:#ffffe1;"></div>
<div style="left:263px;top:231px;width:16px;height:15px;background:#000;"></div>
<div style="left:63px;top:247px;width:221px;height:15px;background:#f4f4f4;"></div>
<div style="left:109px;top:247px;width:1px;height:15px;background:#fff;"></div>
<div style="left:154px;top:247px;width:1px;height:15px;background:#fff;"></div>
<div style="left:199px;top:247px;width:1px;height:15px;background:#fff;"></div>
<div style="left:234px;top:247px;width:1px;height:15px;background:#fff;"></div>
<div style="left:259px;top:247px;width:1px;height:15px;background:#fff;"></div>
<span id="n9" class="t" style="left:65.60px;top:246.52px;font-size:13.5px;line-height:16px;color:#000;transform-origin:0 0;transform:scaleX(0.7635);">NYB</span>
<div style="left:110px;top:247px;width:44px;height:15px;background:#fff;"></div>
<div style="left:110px;top:247px;width:44px;height:1px;background:#707070;"></div>
<div style="left:110px;top:247px;width:1px;height:15px;background:#707070;"></div>
<div style="left:153px;top:247px;width:1px;height:16px;background:#707070;"></div>
<div style="left:139px;top:249px;width:12px;height:14px;background:#f0f0f0;"></div>
<div style="left:138px;top:249px;width:1px;height:14px;background:#a6a6a6;"></div>
<div style="left:151px;top:249px;width:1px;height:14px;background:#a6a6a6;"></div>
<div style="left:139px;top:256px;width:12px;height:1px;background:#a6a6a6;"></div>
<div style="left:111px;top:261px;width:26px;height:1px;background:#707070;"></div>
<svg style="position:absolute;left:142px;top:251px" width="5" height="10" viewBox="0 0 5 10"><path d="M2 0h1v1h1v1h1v1h-5v-1h1v-1h1z M0 7h5v1h-1v1h-1v1h-1v-1h-1v-1h-1z" fill="#000"/></svg>
<span id="t46" class="t" style="left:113.00px;top:247.50px;font-size:13px;line-height:16px;color:#000;transform-origin:0 0;transform:scaleX(1.0000);">1</span>
<div style="left:155px;top:247px;width:44px;height:15px;background:#fff;"></div>
<div style="left:155px;top:247px;width:44px;height:1px;background:#707070;"></div>
<div style="left:155px;top:247px;width:1px;height:15px;background:#707070;"></div>
<div style="left:198px;top:247px;width:1px;height:16px;background:#707070;"></div>
<div style="left:184px;top:249px;width:12px;height:14px;background:#f0f0f0;"></div>
<div style="left:183px;top:249px;width:1px;height:14px;background:#a6a6a6;"></div>
<div style="left:196px;top:249px;width:1px;height:14px;background:#a6a6a6;"></div>
<div style="left:184px;top:256px;width:12px;height:1px;background:#a6a6a6;"></div>
<div style="left:156px;top:261px;width:26px;height:1px;background:#707070;"></div>
<svg style="position:absolute;left:187px;top:251px" width="5" height="10" viewBox="0 0 5 10"><path d="M2 0h1v1h1v1h1v1h-5v-1h1v-1h1z M0 7h5v1h-1v1h-1v1h-1v-1h-1v-1h-1z" fill="#000"/></svg>
<span id="t47" class="t" style="left:157.00px;top:247.50px;font-size:13px;line-height:16px;color:#000;transform-origin:0 0;transform:scaleX(0.9700);">10</span>
<div style="left:200px;top:248px;width:13px;height:13px;background:#fff;border:1px solid #333;box-sizing:border-box;"></div>
<div style="left:238px;top:247px;width:16px;height:15px;background:#ffffe1;"></div>
<div style="left:263px;top:247px;width:16px;height:15px;background:#000;"></div>
<span id="n10" class="t" style="left:65.60px;top:262.52px;font-size:13.5px;line-height:16px;color:#000;transform-origin:0 0;transform:scaleX(0.8407);">NYMX</span>
<div style="left:110px;top:263px;width:44px;height:15px;background:#fff;"></div>
<div style="left:110px;top:263px;width:44px;height:1px;background:#707070;"></div>
<div style="left:110px;top:263px;width:1px;height:15px;background:#707070;"></div>
<div style="left:153px;top:263px;width:1px;height:16px;background:#707070;"></div>
<div style="left:139px;top:265px;width:12px;height:14px;background:#f0f0f0;"></div>
<div style="left:138px;top:265px;width:1px;height:14px;background:#a6a6a6;"></div>
<div style="left:151px;top:265px;width:1px;height:14px;background:#a6a6a6;"></div>
<div style="left:139px;top:272px;width:12px;height:1px;background:#a6a6a6;"></div>
<div style="left:111px;top:277px;width:26px;height:1px;background:#707070;"></div>
<svg style="position:absolute;left:142px;top:267px" width="5" height="10" viewBox="0 0 5 10"><path d="M2 0h1v1h1v1h1v1h-5v-1h1v-1h1z M0 7h5v1h-1v1h-1v1h-1v-1h-1v-1h-1z" fill="#000"/></svg>
<span id="t49" class="t" style="left:113.00px;top:263.50px;font-size:13px;line-height:16px;color:#000;transform-origin:0 0;transform:scaleX(1.0000);">1</span>
<div style="left:155px;top:263px;width:44px;height:15px;background:#fff;"></div>
<div style="left:155px;top:263px;width:44px;height:1px;background:#707070;"></div>
<div style="left:155px;top:263px;width:1px;height:15px;background:#707070;"></div>
<div style="left:198px;top:263px;width:1px;height:16px;background:#707070;"></div>
<div style="left:184px;top:265px;width:12px;height:14px;background:#f0f0f0;"></div>
<div style="left:183px;top:265px;width:1px;height:14px;background:#a6a6a6;"></div>
<div style="left:196px;top:265px;width:1px;height:14px;background:#a6a6a6;"></div>
<div style="left:184px;top:272px;width:12px;height:1px;background:#a6a6a6;"></div>
<div style="left:156px;top:277px;width:26px;height:1px;background:#707070;"></div>
<svg style="position:absolute;left:187px;top:267px" width="5" height="10" viewBox="0 0 5 10"><path d="M2 0h1v1h1v1h1v1h-5v-1h1v-1h1z M0 7h5v1h-1v1h-1v1h-1v-1h-1v-1h-1z" fill="#000"/></svg>
<span id="t50" class="t" style="left:157.00px;top:263.50px;font-size:13px;line-height:16px;color:#000;transform-origin:0 0;transform:scaleX(0.9700);">10</span>
<div style="left:200px;top:264px;width:13px;height:13px;background:#fff;border:1px solid #333;box-sizing:border-box;"></div>
<div style="left:238px;top:263px;width:16px;height:15px;background:#ffffe1;"></div>
<div style="left:263px;top:263px;width:16px;height:15px;background:#000;"></div>
<div style="left:63px;top:279px;width:221px;height:15px;background:#f4f4f4;"></div>
<div style="left:109px;top:279px;width:1px;height:15px;background:#fff;"></div>
<div style="left:154px;top:279px;width:1px;height:15px;background:#fff;"></div>
<div style="left:199px;top:279px;width:1px;height:15px;background:#fff;"></div>
<div style="left:234px;top:279px;width:1px;height:15px;background:#fff;"></div>
<div style="left:259px;top:279px;width:1px;height:15px;background:#fff;"></div>
<span id="n11" class="t" style="left:65.60px;top:278.52px;font-size:13.5px;line-height:16px;color:#000;transform-origin:0 0;transform:scaleX(0.8186);">OMG</span>
<div style="left:110px;top:279px;width:44px;height:15px;background:#fff;"></div>
<div style="left:110px;top:279px;width:44px;height:1px;background:#707070;"></div>
<div style="left:110px;top:279px;width:1px;height:15px;background:#707070;"></div>
<div style="left:153px;top:279px;width:1px;height:16px;background:#707070;"></div>
<div style="left:139px;top:281px;width:12px;height:14px;background:#f0f0f0;"></div>
<div style="left:138px;top:281px;width:1px;height:14px;background:#a6a6a6;"></div>
<div style="left:151px;top:281px;width:1px;height:14px;background:#a6a6a6;"></div>
<div style="left:139px;top:288px;width:12px;height:1px;background:#a6a6a6;"></div>
<div style="left:111px;top:293px;width:26px;height:1px;background:#707070;"></div>
<svg style="position:absolute;left:142px;top:283px" width="5" height="10" viewBox="0 0 5 10"><path d="M2 0h1v1h1v1h1v1h-5v-1h1v-1h1z M0 7h5v1h-1v1h-1v1h-1v-1h-1v-1h-1z" fill="#000"/></svg>
<span id="t52" class="t" style="left:113.00px;top:279.50px;font-size:13px;line-height:16px;color:#000;transform-origin:0 0;transform:scaleX(1.0000);">1</span>
<div style="left:155px;top:279px;width:44px;height:15px;background:#fff;"></div>
<div style="left:155px;top:279px;width:44px;height:1px;background:#707070;"></div>
<div style="left:155px;top:279px;width:1px;height:15px;background:#707070;"></div>
<div style="left:198px;top:279px;width:1px;height:16px;background:#707070;"></div>
<div style="left:184px;top:281px;width:12px;height:14px;background:#f0f0f0;"></div>
<div style="left:183px;top:281px;width:1px;height:14px;background:#a6a6a6;"></div>
<div style="left:196px;top:281px;width:1px;height:14px;background:#a6a6a6;"></div>
<div style="left:184px;top:288px;width:12px;height:1px;background:#a6a6a6;"></div>
<div style="left:156px;top:293px;width:26px;height:1px;background:#707070;"></div>
<svg style="position:absolute;left:187px;top:283px" width="5" height="10" viewBox="0 0 5 10"><path d="M2 0h1v1h1v1h1v1h-5v-1h1v-1h1z M0 7h5v1h-1v1h-1v1h-1v-1h-1v-1h-1z" fill="#000"/></svg>
<span id="t53" class="t" style="left:157.00px;top:279.50px;font-size:13px;line-height:16px;color:#000;transform-origin:0 0;transform:scaleX(0.9700);">10</span>
<div style="left:200px;top:280px;width:13px;height:13px;background:#fff;border:1px solid #333;box-sizing:border-box;"></div>
<div style="left:238px;top:279px;width:16px;height:15px;background:#ffffe1;"></div>
<div style="left:263px;top:279px;width:16px;height:15px;background:#000;"></div>
<span id="n12" class="t" style="left:65.60px;top:294.52px;font-size:13.5px;line-height:16px;color:#000;transform-origin:0 0;transform:scaleX(0.7014);">PUR</span>
<div style="left:110px;top:295px;width:44px;height:15px;background:#fff;"></div>
<div style="left:110px;top:295px;width:44px;height:1px;background:#707070;"></div>
<div style="left:110px;top:295px;width:1px;height:15px;background:#707070;"></div>
<div style="left:153px;top:295px;width:1px;height:16px;background:#707070;"></div>
<div style="left:139px;top:297px;width:12px;height:14px;background:#f0f0f0;"></div>
<div style="left:138px;top:297px;width:1px;height:14px;background:#a6a6a6;"></div>
<div style="left:151px;top:297px;width:1px;height:14px;background:#a6a6a6;"></div>
<div style="left:139px;top:304px;width:12px;height:1px;background:#a6a6a6;"></div>
<div style="left:111px;top:309px;width:26px;height:1px;background:#707070;"></div>
<svg style="position:absolute;left:142px;top:299px" width="5" height="10" viewBox="0 0 5 10"><path d="M2 0h1v1h1v1h1v1h-5v-1h1v-1h1z M0 7h5v1h-1v1h-1v1h-1v-1h-1v-1h-1z" fill="#000"/></svg>
<span id="t55" class="t" style="left:113.00px;top:295.50px;font-size:13px;line-height:16px;color:#000;transform-origin:0 0;transform:scaleX(1.0000);">1</span>
<div style="left:155px;top:295px;width:44px;height:15px;background:#fff;"></div>
<div style="left:155px;top:295px;width:44px;height:1px;background:#707070;"></div>
<div style="left:155px;top:295px;width:1px;height:15px;background:#707070;"></div>
<div style="left:198px;top:295px;width:1px;height:16px;background:#707070;"></div>
<div style="left:184px;top:297px;width:12px;height:14px;background:#f0f0f0;"></div>
<div style="left:183px;top:297px;width:1px;height:14px;background:#a6a6a6;"></div>
<div style="left:196px;top:297px;width:1px;height:14px;background:#a6a6a6;"></div>
<div style="left:184px;top:304px;width:12px;height:1px;background:#a6a6a6;"></div>
<div style="left:156px;top:309px;width:26px;height:1px;background:#707070;"></div>
<svg style="position:absolute;left:187px;top:299px" width="5" height="10" viewBox="0 0 5 10"><path d="M2 0h1v1h1v1h1v1h-5v-1h1v-1h1z M0 7h5v1h-1v1h-1v1h-1v-1h-1v-1h-1z" fill="#000"/></svg>
<span id="t56" class="t" style="left:157.00px;top:295.50px;font-size:13px;line-height:16px;color:#000;transform-origin:0 0;transform:scaleX(0.9700);">10</span>
<div style="left:200px;top:296px;width:13px;height:13px;background:#fff;border:1px solid #333;box-sizing:border-box;"></div>
<div style="left:238px;top:295px;width:16px;height:15px;background:#ffffe1;"></div>
<div style="left:263px;top:295px;width:16px;height:15px;background:#000;"></div>
<div style="left:63px;top:311px;width:221px;height:15px;background:#f4f4f4;"></div>
<div style="left:109px;top:311px;width:1px;height:15px;background:#fff;"></div>
<div style="left:154px;top:311px;width:1px;height:15px;background:#fff;"></div>
<div style="left:199px;top:311px;width:1px;height:15px;background:#fff;"></div>
<div style="left:234px;top:311px;width:1px;height:15px;background:#fff;"></div>
<div style="left:259px;top:311px;width:1px;height:15px;background:#fff;"></div>
<span id="n13" class="t" style="left:65.60px;top:310.52px;font-size:13.5px;line-height:16px;color:#000;transform-origin:0 0;transform:scaleX(0.8050);">TMXS</span>
<div style="left:110px;top:311px;width:44px;height:15px;background:#fff;"></div>
<div style="left:110px;top:311px;width:44px;height:1px;background:#707070;"></div>
<div style="left:110px;top:311px;width:1px;height:15px;background:#707070;"></div>
<div style="left:153px;top:311px;width:1px;height:16px;background:#707070;"></div>
<div style="left:139px;top:313px;width:12px;height:14px;background:#f0f0f0;"></div>
<div style="left:138px;top:313px;width:1px;height:14px;background:#a6a6a6;"></div>
<div style="left:151px;top:313px;width:1px;height:14px;background:#a6a6a6;"></div>
<div style="left:139px;top:320px;width:12px;height:1px;background:#a6a6a6;"></div>
<div style="left:111px;top:325px;width:26px;height:1px;background:#707070;"></div>
<svg style="position:absolute;left:142px;top:315px" width="5" height="10" viewBox="0 0 5 10"><path d="M2 0h1v1h1v1h1v1h-5v-1h1v-1h1z M0 7h5v1h-1v1h-1v1h-1v-1h-1v-1h-1z" fill="#000"/></svg>
<span id="t58" class="t" style="left:113.00px;top:311.50px;font-size:13px;line-height:16px;color:#000;transform-origin:0 0;transform:scaleX(1.0000);">1</span>
<div style="left:155px;top:311px;width:44px;height:15px;background:#fff;"></div>
<div style="left:155px;top:311px;width:44px;height:1px;background:#707070;"></div>
<div style="left:155px;top:311px;width:1px;height:15px;background:#707070;"></div>
<div style="left:198px;top:311px;width:1px;height:16px;background:#707070;"></div>
<div style="left:184px;top:313px;width:12px;height:14px;background:#f0f0f0;"></div>
<div style="left:183px;top:313px;width:1px;height:14px;background:#a6a6a6;"></div>
<div style="left:196px;top:313px;width:1px;height:14px;background:#a6a6a6;"></div>
<div style="left:184px;top:320px;width:12px;height:1px;background:#a6a6a6;"></div>
<div style="left:156px;top:325px;width:26px;height:1px;background:#707070;"></div>
<svg style="position:absolute;left:187px;top:315px" width="5" height="10" viewBox="0 0 5 10"><path d="M2 0h1v1h1v1h1v1h-5v-1h1v-1h1z M0 7h5v1h-1v1h-1v1h-1v-1h-1v-1h-1z" fill="#000"/></svg>
<span id="t59" class="t" style="left:157.00px;top:311.50px;font-size:13px;line-height:16px;color:#000;transform-origin:0 0;transform:scaleX(0.9700);">10</span>
<div style="left:200px;top:312px;width:13px;height:13px;background:#fff;border:1px solid #333;box-sizing:border-box;"></div>
<div style="left:238px;top:311px;width:16px;height:15px;background:#ffffe1;"></div>
<div style="left:263px;top:311px;width:16px;height:15px;background:#000;"></div>
<span id="n14" class="t" style="left:65.60px;top:326.52px;font-size:13.5px;line-height:16px;color:#000;font-weight:bold;transform-origin:0 0;transform:scaleX(0.8566);">TSX</span>
<div style="left:110px;top:327px;width:44px;height:15px;background:#fff;"></div>
<div style="left:110px;top:327px;width:44px;height:1px;background:#707070;"></div>
<div style="left:110px;top:327px;width:1px;height:15px;background:#707070;"></div>
<div style="left:153px;top:327px;width:1px;height:16px;background:#707070;"></div>
<div style="left:139px;top:329px;width:12px;height:14px;background:#f0f0f0;"></div>
<div style="left:138px;top:329px;width:1px;height:14px;background:#a6a6a6;"></div>
<div style="left:151px;top:329px;width:1px;height:14px;background:#a6a6a6;"></div>
<div style="left:139px;top:336px;width:12px;height:1px;background:#a6a6a6;"></div>
<div style="left:111px;top:341px;width:26px;height:1px;background:#707070;"></div>
<svg style="position:absolute;left:142px;top:331px" width="5" height="10" viewBox="0 0 5 10"><path d="M2 0h1v1h1v1h1v1h-5v-1h1v-1h1z M0 7h5v1h-1v1h-1v1h-1v-1h-1v-1h-1z" fill="#000"/></svg>
<span id="t61" class="t" style="left:113.00px;top:327.50px;font-size:13px;line-height:16px;color:#000;transform-origin:0 0;transform:scaleX(1.0000);">1</span>
<div style="left:155px;top:327px;width:44px;height:15px;background:#fff;"></div>
<div style="left:155px;top:327px;width:44px;height:1px;background:#707070;"></div>
<div style="left:155px;top:327px;width:1px;height:15px;background:#707070;"></div>
<div style="left:198px;top:327px;width:1px;height:16px;background:#707070;"></div>
<div style="left:184px;top:329px;width:12px;height:14px;background:#f0f0f0;"></div>
<div style="left:183px;top:329px;width:1px;height:14px;background:#a6a6a6;"></div>
<div style="left:196px;top:329px;width:1px;height:14px;background:#a6a6a6;"></div>
<div style="left:184px;top:336px;width:12px;height:1px;background:#a6a6a6;"></div>
<div style="left:156px;top:341px;width:26px;height:1px;background:#707070;"></div>
<svg style="position:absolute;left:187px;top:331px" width="5" height="10" viewBox="0 0 5 10"><path d="M2 0h1v1h1v1h1v1h-5v-1h1v-1h1z M0 7h5v1h-1v1h-1v1h-1v-1h-1v-1h-1z" fill="#000"/></svg>
<span id="t62" class="t" style="left:157.00px;top:327.50px;font-size:13px;line-height:16px;color:#000;transform-origin:0 0;transform:scaleX(0.9700);">10</span>
<div style="left:200px;top:328px;width:13px;height:13px;background:#fff;border:1px solid #333;box-sizing:border-box;"></div>
<div style="left:238px;top:327px;width:16px;height:15px;background:#ffffe1;"></div>
<div style="left:263px;top:327px;width:16px;height:15px;background:#000;"></div>
<div style="left:359px;top:83px;width:16px;height:260px;background:#f0f0f0;"></div>
<div style="left:359px;top:201px;width:15px;height:125px;background:#cdcdcd;"></div>
<svg style="position:absolute;left:362px;top:88px" width="9" height="7" viewBox="0 0 9 7"><path d="M1.2 5.8 L4.5 2 L7.8 5.8" fill="none" stroke="#555" stroke-width="2"/></svg>
<svg style="position:absolute;left:362px;top:332px" width="9" height="7" viewBox="0 0 9 7"><path d="M1.2 0.8 L4.5 4.6 L7.8 0.8" fill="none" stroke="#555" stroke-width="2"/></svg>
<div style="left:57px;top:57px;width:206px;height:27px;border:1px solid #ff0000;box-sizing:border-box;"></div>
<div style="left:393px;top:59px;width:161px;height:314px;border:1px solid #dadada;box-sizing:border-box;"></div>
<div style="left:399.5px;top:53px;width:115px;height:13px;background:#fff;"></div>
<span id="t63" class="t" style="left:401.50px;top:53.69px;font-size:11px;line-height:13px;color:#000;transform-origin:0 0;transform:scaleX(0.9406);">Price Level Color Bands</span>
<div style="left:563px;top:59px;width:181px;height:314px;border:1px solid #dadada;box-sizing:border-box;"></div>
<div style="left:570.2px;top:53px;width:97px;height:13px;background:#fff;"></div>
<span id="t64" class="t" style="left:572.20px;top:53.69px;font-size:11px;line-height:13px;color:#000;transform-origin:0 0;transform:scaleX(0.9626);">Axes Color Settings</span>
<div style="left:53px;top:386px;width:291px;height:74px;border:1px solid #dadada;box-sizing:border-box;"></div>
<div style="left:59.5px;top:380px;width:72px;height:13px;background:#fff;"></div>
<span id="t65" class="t" style="left:61.50px;top:380.69px;font-size:11px;line-height:13px;color:#000;transform-origin:0 0;transform:scaleX(0.9929);">Other Options</span>
<div style="left:353px;top:386px;width:182px;height:74px;border:1px solid #dadada;box-sizing:border-box;"></div>
<div style="left:359.8px;top:380px;width:67.2px;height:13px;background:#fff;"></div>
<span id="t66" class="t" style="left:361.80px;top:380.69px;font-size:11px;line-height:13px;color:#000;transform-origin:0 0;transform:scaleX(0.9396);">Level1 Colors</span>
<div style="left:543px;top:386px;width:201px;height:74px;border:1px solid #dadada;box-sizing:border-box;"></div>
<div style="left:549.9px;top:380px;width:89px;height:13px;background:#fff;"></div>
<span id="t67" class="t" style="left:551.90px;top:380.69px;font-size:11px;line-height:13px;color:#000;transform-origin:0 0;transform:scaleX(0.9588);">Order Highlighting</span>
<div style="left:403px;top:73px;width:90px;height:291px;background:#fff;border:1px solid #7a7a85;box-sizing:border-box;"></div>
<div style="left:404px;top:269px;width:22px;height:77px;background:#f0f0f0;"></div>
<div style="left:425px;top:74px;width:1px;height:19px;background:#e4e4e4;"></div>
<div style="left:464px;top:74px;width:1px;height:19px;background:#e4e4e4;"></div>
<span id="t68" class="t" style="left:437.30px;top:80.44px;font-size:10px;line-height:12px;color:#000;text-rendering:geometricPrecision;-webkit-text-stroke:0.12px #000;transform-origin:0 0;transform:scaleX(0.7521);">BGD</span>
<div style="left:465px;top:75px;width:27px;height:17px;overflow:hidden;"><span id="t69" class="t" style="left:9.00px;top:5.44px;font-size:10px;line-height:12px;color:#000;text-rendering:geometricPrecision;-webkit-text-stroke:0.12px #000;transform-origin:0 0;transform:scaleX(0.9300);">Color</span></div>
<div style="left:426px;top:93px;width:38px;height:15px;background:#ffff80;"></div>
<div style="left:465px;top:93px;width:27px;height:15px;background:#000;"></div>
<div style="left:404px;top:93px;width:21px;height:12px;overflow:hidden;"><span id="t70" class="t" style="left:3.50px;top:2.59px;font-size:11px;line-height:13px;color:#000;transform-origin:0 0;transform:scaleX(1.0500);">1</span></div>
<div style="left:426px;top:109px;width:38px;height:15px;background:#ff2020;"></div>
<div style="left:465px;top:109px;width:27px;height:15px;background:#000;"></div>
<div style="left:404px;top:109px;width:21px;height:12px;overflow:hidden;"><span id="t71" class="t" style="left:3.50px;top:2.59px;font-size:11px;line-height:13px;color:#000;transform-origin:0 0;transform:scaleX(1.0500);">2</span></div>
<div style="left:426px;top:125px;width:38px;height:15px;background:#0080ff;"></div>
<div style="left:465px;top:125px;width:27px;height:15px;background:#000;"></div>
<div style="left:404px;top:125px;width:21px;height:12px;overflow:hidden;"><span id="t72" class="t" style="left:3.50px;top:2.59px;font-size:11px;line-height:13px;color:#000;transform-origin:0 0;transform:scaleX(1.0500);">3</span></div>
<div style="left:426px;top:141px;width:38px;height:15px;background:#7a52a8;"></div>
<div style="left:465px;top:141px;width:27px;height:15px;background:#000;"></div>
<div style="left:404px;top:141px;width:21px;height:12px;overflow:hidden;"><span id="t73" class="t" style="left:3.50px;top:2.59px;font-size:11px;line-height:13px;color:#000;transform-origin:0 0;transform:scaleX(1.0500);">4</span></div>
<div style="left:426px;top:157px;width:38px;height:15px;background:#40f0f0;"></div>
<div style="left:465px;top:157px;width:27px;height:15px;background:#000;"></div>
<div style="left:404px;top:157px;width:21px;height:12px;overflow:hidden;"><span id="t74" class="t" style="left:3.50px;top:2.59px;font-size:11px;line-height:13px;color:#000;transform-origin:0 0;transform:scaleX(1.0500);">5</span></div>
<div style="left:426px;top:173px;width:38px;height:15px;background:#00c000;"></div>
<div style="left:465px;top:173px;width:27px;height:15px;background:#000;"></div>
<div style="left:404px;top:173px;width:21px;height:12px;overflow:hidden;"><span id="t75" class="t" style="left:3.50px;top:2.59px;font-size:11px;line-height:13px;color:#000;transform-origin:0 0;transform:scaleX(1.0500);">6</span></div>
<div style="left:426px;top:189px;width:38px;height:15px;background:#c020c0;"></div>
<div style="left:465px;top:189px;width:27px;height:15px;background:#000;"></div>
<div style="left:404px;top:189px;width:21px;height:12px;overflow:hidden;"><span id="t76" class="t" style="left:3.50px;top:2.59px;font-size:11px;line-height:13px;color:#000;transform-origin:0 0;transform:scaleX(1.0500);">7</span></div>
<div style="left:426px;top:205px;width:38px;height:15px;background:#aaaa70;"></div>
<div style="left:465px;top:205px;width:27px;height:15px;background:#000;"></div>
<div style="left:404px;top:205px;width:21px;height:12px;overflow:hidden;"><span id="t77" class="t" style="left:3.50px;top:2.59px;font-size:11px;line-height:13px;color:#000;transform-origin:0 0;transform:scaleX(1.0500);">8</span></div>
<div style="left:426px;top:221px;width:38px;height:15px;background:#60bba0;"></div>
<div style="left:465px;top:221px;width:27px;height:15px;background:#000;"></div>
<div style="left:404px;top:221px;width:21px;height:12px;overflow:hidden;"><span id="t78" class="t" style="left:3.50px;top:2.59px;font-size:11px;line-height:13px;color:#000;transform-origin:0 0;transform:scaleX(1.0500);">9</span></div>
<div style="left:426px;top:237px;width:38px;height:15px;background:#c09010;"></div>
<div style="left:465px;top:237px;width:27px;height:15px;background:#000;"></div>
<div style="left:404px;top:237px;width:21px;height:12px;overflow:hidden;"><span id="t79" class="t" style="left:3.50px;top:2.59px;font-size:11px;line-height:13px;color:#000;transform-origin:0 0;transform:scaleX(1.0500);">10</span></div>
<div style="left:426px;top:253px;width:38px;height:15px;background:#666666;"></div>
<div style="left:465px;top:253px;width:27px;height:15px;background:#000;"></div>
<div style="left:404px;top:253px;width:21px;height:12px;overflow:hidden;"><span id="t80" class="t" style="left:3.50px;top:2.59px;font-size:11px;line-height:13px;color:#000;transform-origin:0 0;transform:scaleX(1.0500);">11</span></div>
<div style="left:404px;top:347px;width:88px;height:16px;background:#f0f0f0;"></div>
<div style="left:421px;top:347px;width:45px;height:15px;background:#cdcdcd;"></div>
<svg style="position:absolute;left:409px;top:350px" width="6" height="9" viewBox="0 0 6 9"><path d="M5 1 L1.5 4.5 L5 8" fill="none" stroke="#555" stroke-width="2"/></svg>
<svg style="position:absolute;left:481px;top:350px" width="6" height="9" viewBox="0 0 6 9"><path d="M1 1 L4.5 4.5 L1 8" fill="none" stroke="#555" stroke-width="2"/></svg>
<div style="left:499px;top:73px;width:45px;height:290px;background:#fff;border:1px solid #dadada;box-sizing:border-box;"></div>
<div style="left:510px;top:157px;width:23px;height:21px;background:#e1e1e1;border:1px solid #adadad;box-sizing:border-box;"></div>
<span id="t81" class="t" style="left:517.50px;top:160.70px;font-size:13px;line-height:16px;color:#000;transform-origin:0 0;transform:scaleX(1.0000);">+</span>
<div style="left:510px;top:259px;width:23px;height:21px;background:#e1e1e1;border:1px solid #adadad;box-sizing:border-box;"></div>
<span id="t82" class="t" style="left:519.50px;top:261.50px;font-size:13px;line-height:16px;color:#000;transform-origin:0 0;transform:scaleX(1.0000);">-</span>
<div style="left:573px;top:73px;width:110px;height:291px;background:#fff;border:1px solid #7a7a85;box-sizing:border-box;"></div>
<div style="left:612px;top:74px;width:1px;height:19px;background:#e4e4e4;"></div>
<div style="left:651px;top:74px;width:1px;height:19px;background:#e4e4e4;"></div>
<span id="t83" class="t" style="left:586.20px;top:80.44px;font-size:10px;line-height:12px;color:#000;text-rendering:geometricPrecision;-webkit-text-stroke:0.12px #000;transform-origin:0 0;transform:scaleX(0.8413);">Axe</span>
<span id="t84" class="t" style="left:624.30px;top:80.44px;font-size:10px;line-height:12px;color:#000;text-rendering:geometricPrecision;-webkit-text-stroke:0.12px #000;transform-origin:0 0;transform:scaleX(0.7521);">BGD</span>
<div style="left:652px;top:75px;width:30px;height:17px;overflow:hidden;"><span id="t85" class="t" style="left:9.00px;top:5.44px;font-size:10px;line-height:12px;color:#000;text-rendering:geometricPrecision;-webkit-text-stroke:0.12px #000;transform-origin:0 0;transform:scaleX(0.9300);">Color</span></div>
<div style="left:613px;top:93px;width:38px;height:15px;background:#000;"></div>
<div style="left:652px;top:93px;width:30px;height:15px;background:#f0f000;"></div>
<span id="a0" class="t" style="left:577.00px;top:93.00px;font-size:13px;line-height:16px;color:#000;transform-origin:0 0;transform:scaleX(0.8103);">MSCO</span>
<div style="left:575px;top:109px;width:37px;height:15px;background:#f4f4f4;"></div>
<div style="left:613px;top:109px;width:38px;height:15px;background:#000;"></div>
<div style="left:652px;top:109px;width:30px;height:15px;background:#e00000;"></div>
<span id="a1" class="t" style="left:577.00px;top:109.00px;font-size:13px;line-height:16px;color:#000;transform-origin:0 0;transform:scaleX(0.8360);">LEHM</span>
<div style="left:613px;top:125px;width:38px;height:15px;background:#000;"></div>
<div style="left:652px;top:125px;width:30px;height:15px;background:#00e000;"></div>
<span id="a2" class="t" style="left:577.00px;top:125.00px;font-size:13px;line-height:16px;color:#000;transform-origin:0 0;transform:scaleX(0.7827);">BRMS</span>
<div style="left:575px;top:141px;width:37px;height:15px;background:#f4f4f4;"></div>
<div style="left:613px;top:141px;width:38px;height:15px;background:#000;"></div>
<div style="left:652px;top:141px;width:30px;height:15px;background:#ee82ee;"></div>
<span id="a3" class="t" style="left:577.00px;top:141.00px;font-size:13px;line-height:16px;color:#000;transform-origin:0 0;transform:scaleX(0.8249);">GETC</span>
<div style="left:613px;top:157px;width:38px;height:15px;background:#000;"></div>
<div style="left:652px;top:157px;width:30px;height:15px;background:#00ffff;"></div>
<span id="a4" class="t" style="left:577.00px;top:157.00px;font-size:13px;line-height:16px;color:#000;font-weight:bold;transform-origin:0 0;transform:scaleX(0.9754);">TIMB</span>
<div style="left:575px;top:157px;width:36px;height:15px;border:1px dotted #000;box-sizing:border-box;"></div>
<div style="left:574px;top:347px;width:108px;height:16px;background:#f0f0f0;"></div>
<div style="left:591px;top:347px;width:68px;height:15px;background:#cdcdcd;"></div>
<svg style="position:absolute;left:579px;top:350px" width="6" height="9" viewBox="0 0 6 9"><path d="M5 1 L1.5 4.5 L5 8" fill="none" stroke="#555" stroke-width="2"/></svg>
<svg style="position:absolute;left:671px;top:350px" width="6" height="9" viewBox="0 0 6 9"><path d="M1 1 L4.5 4.5 L1 8" fill="none" stroke="#555" stroke-width="2"/></svg>
<div style="left:689px;top:73px;width:45px;height:290px;background:#fff;border:1px solid #dadada;box-sizing:border-box;"></div>
<div style="left:700px;top:131px;width:23px;height:21px;background:#e1e1e1;border:2px solid #0078d7;box-sizing:border-box;"></div>
<span id="t91" class="t" style="left:707.60px;top:134.70px;font-size:13px;line-height:16px;color:#000;transform-origin:0 0;transform:scaleX(1.0000);">+</span>
<div style="left:700px;top:207px;width:23px;height:21px;background:#e1e1e1;border:1px solid #adadad;box-sizing:border-box;"></div>
<span id="t92" class="t" style="left:709.50px;top:209.50px;font-size:13px;line-height:16px;color:#000;transform-origin:0 0;transform:scaleX(1.0000);">-</span>
<div style="left:700px;top:283px;width:23px;height:21px;background:#e1e1e1;border:1px solid #adadad;box-sizing:border-box;"></div>
<span id="t93" class="t" style="left:708.00px;top:286.84px;font-size:12px;line-height:14px;color:#000;transform-origin:0 0;transform:scaleX(1.0000);">x</span>
<span id="t94" class="t" style="left:62.80px;top:415.69px;font-size:11px;line-height:13px;color:#000;transform-origin:0 0;transform:scaleX(0.9191);">Grid Line Color</span>
<div style="left:150px;top:411px;width:30px;height:18px;background:#d2691e;"></div>
<div style="left:180px;top:410px;width:1px;height:20px;background:#a0a0a0;"></div>
<div style="left:149px;top:429px;width:32px;height:1px;background:#a0a0a0;"></div>
<span id="t95" class="t" style="left:267.00px;top:395.69px;font-size:11px;line-height:13px;color:#000;transform-origin:0 0;transform:scaleX(0.9195);">Back</span>
<span id="t96" class="t" style="left:307.30px;top:395.69px;font-size:11px;line-height:13px;color:#000;transform-origin:0 0;transform:scaleX(1.1146);">Text</span>
<span id="t97" class="t" style="left:208.70px;top:415.69px;font-size:11px;line-height:13px;color:#000;transform-origin:0 0;transform:scaleX(0.9424);">Header</span>
<div style="left:264px;top:411px;width:30px;height:18px;background:#d3d3d3;"></div>
<div style="left:294px;top:410px;width:1px;height:20px;background:#a0a0a0;"></div>
<div style="left:263px;top:429px;width:32px;height:1px;background:#a0a0a0;"></div>
<div style="left:304px;top:411px;width:30px;height:18px;background:#000;"></div>
<div style="left:334px;top:410px;width:1px;height:20px;background:#a0a0a0;"></div>
<div style="left:303px;top:429px;width:32px;height:1px;background:#a0a0a0;"></div>
<span id="t98" class="t" style="left:183.60px;top:441.89px;font-size:11px;line-height:13px;color:#000;transform-origin:0 0;transform:scaleX(0.9469);">Background</span>
<div style="left:264px;top:437px;width:30px;height:18px;background:#808080;"></div>
<div style="left:294px;top:436px;width:1px;height:20px;background:#a0a0a0;"></div>
<div style="left:263px;top:455px;width:32px;height:1px;background:#a0a0a0;"></div>
<span id="t99" class="t" style="left:437.30px;top:395.69px;font-size:11px;line-height:13px;color:#000;transform-origin:0 0;transform:scaleX(0.9195);">Back</span>
<span id="t100" class="t" style="left:477.80px;top:395.69px;font-size:11px;line-height:13px;color:#000;transform-origin:0 0;transform:scaleX(1.1146);">Text</span>
<span id="t101" class="t" style="left:362.50px;top:415.69px;font-size:11px;line-height:13px;color:#000;transform-origin:0 0;transform:scaleX(0.9213);">Up Tick</span>
<div style="left:434px;top:411px;width:30px;height:18px;background:#008000;"></div>
<div style="left:464px;top:410px;width:1px;height:20px;background:#a0a0a0;"></div>
<div style="left:433px;top:429px;width:32px;height:1px;background:#a0a0a0;"></div>
<div style="left:474px;top:411px;width:30px;height:18px;background:#000;"></div>
<div style="left:504px;top:410px;width:1px;height:20px;background:#a0a0a0;"></div>
<div style="left:473px;top:429px;width:32px;height:1px;background:#a0a0a0;"></div>
<span id="t102" class="t" style="left:362.50px;top:441.89px;font-size:11px;line-height:13px;color:#000;transform-origin:0 0;transform:scaleX(0.9458);">Down Tick</span>
<div style="left:434px;top:437px;width:30px;height:18px;background:#ff0000;"></div>
<div style="left:464px;top:436px;width:1px;height:20px;background:#a0a0a0;"></div>
<div style="left:433px;top:455px;width:32px;height:1px;background:#a0a0a0;"></div>
<div style="left:474px;top:437px;width:30px;height:18px;background:#000;"></div>
<div style="left:504px;top:436px;width:1px;height:20px;background:#a0a0a0;"></div>
<div style="left:473px;top:455px;width:32px;height:1px;background:#a0a0a0;"></div>
<div style="left:553px;top:404px;width:13px;height:13px;background:#fff;border:1px solid #333;box-sizing:border-box;"></div>
<span id="t103" class="t" style="left:570.40px;top:404.99px;font-size:11px;line-height:13px;color:#000;transform-origin:0 0;transform:scaleX(0.9765);">Highlight Accepted Orders</span>
<span id="t104" class="t" style="left:627.50px;top:421.69px;font-size:11px;line-height:13px;color:#000;transform-origin:0 0;transform:scaleX(0.9032);">Back</span>
<span id="t105" class="t" style="left:667.50px;top:421.69px;font-size:11px;line-height:13px;color:#000;transform-origin:0 0;transform:scaleX(1.0997);">Text</span>
<span id="t106" class="t" style="left:552.60px;top:441.89px;font-size:11px;line-height:13px;color:#000;transform-origin:0 0;transform:scaleX(0.9623);">Order Color</span>
<div style="left:624px;top:437px;width:30px;height:18px;background:#000;"></div>
<div style="left:654px;top:436px;width:1px;height:20px;background:#a0a0a0;"></div>
<div style="left:623px;top:455px;width:32px;height:1px;background:#a0a0a0;"></div>
<div style="left:664px;top:437px;width:30px;height:18px;background:#fff;"></div>
<div style="left:694px;top:436px;width:1px;height:20px;background:#a0a0a0;"></div>
<div style="left:663px;top:455px;width:32px;height:1px;background:#a0a0a0;"></div>
<div style="left:31px;top:481px;width:731px;height:70px;border:1px solid #dadada;box-sizing:border-box;"></div>
<div style="left:372px;top:492px;width:114px;height:21px;background:#e1e1e1;border:1px solid #adadad;box-sizing:border-box;"></div>
<span id="t107" class="t" style="left:397.10px;top:496.69px;font-size:11px;line-height:13px;color:#000;transform-origin:0 0;transform:scaleX(0.9905);">Load Default</span>
<div style="left:500px;top:492px;width:113px;height:21px;background:#e1e1e1;border:1px solid #adadad;box-sizing:border-box;"></div>
<span id="t108" class="t" style="left:517.20px;top:496.69px;font-size:11px;line-height:13px;color:#000;transform-origin:0 0;transform:scaleX(0.9890);">Save as Default</span>
<div style="left:627px;top:492px;width:114px;height:21px;background:#e1e1e1;border:1px solid #adadad;box-sizing:border-box;"></div>
<span id="t109" class="t" style="left:669.60px;top:496.69px;font-size:11px;line-height:13px;color:#000;transform-origin:0 0;transform:scaleX(0.9807);">Apply</span>
<div style="left:500px;top:527px;width:113px;height:21px;background:#e1e1e1;border:1px solid #adadad;box-sizing:border-box;"></div>
<span id="t110" class="t" style="left:548.50px;top:531.69px;font-size:11px;line-height:13px;color:#000;transform-origin:0 0;transform:scaleX(0.9179);">OK</span>
<div style="left:627px;top:527px;width:114px;height:21px;background:#e1e1e1;border:1px solid #adadad;box-sizing:border-box;"></div>
<span id="t111" class="t" style="left:667.40px;top:531.69px;font-size:11px;line-height:13px;color:#000;transform-origin:0 0;transform:scaleX(0.9431);">Cancel</span>
</div></body></html>
